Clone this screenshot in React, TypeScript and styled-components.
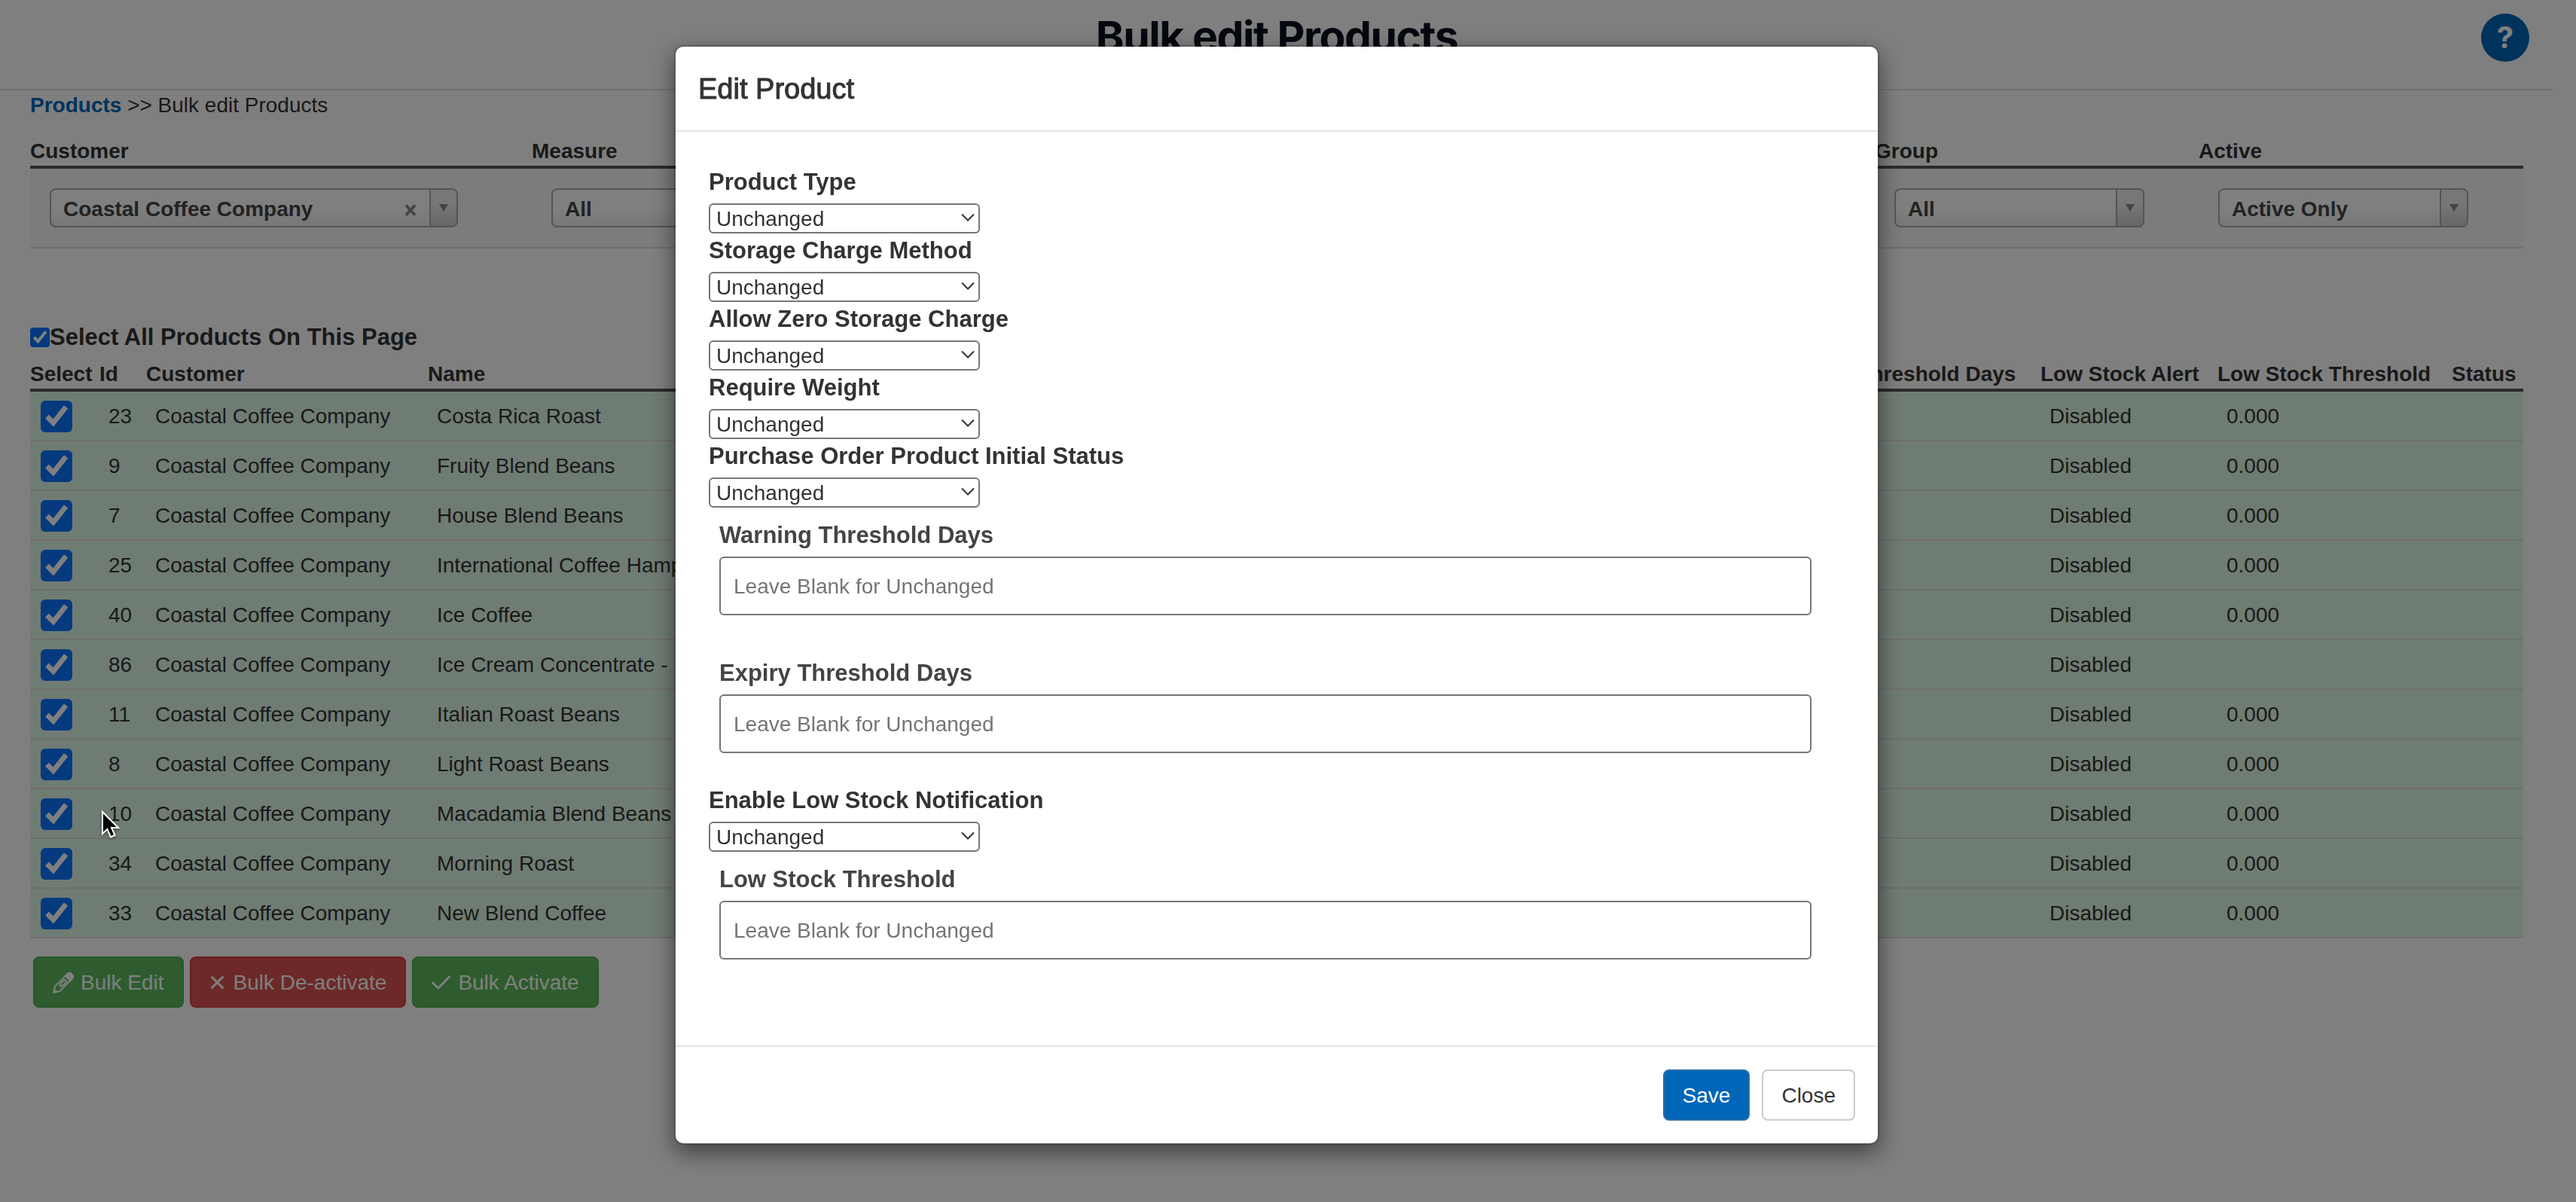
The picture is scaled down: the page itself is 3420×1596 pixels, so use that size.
import React from "react";
import styled, { createGlobalStyle } from "styled-components";

const GlobalStyle = createGlobalStyle`
  *, *::before, *::after { box-sizing: border-box; }
  html, body { margin: 0; padding: 0; background: #fff; }
  body {
    overflow: hidden;
    color: #333;
    font-family: "Liberation Sans", Arial, Helvetica, sans-serif;
    font-size: 28px;
    line-height: 40px;
  }
  button, input, select { font: inherit; color: inherit; margin: 0; }
`;

const Page = styled.div`
  min-height: 100vh;
  padding-right: 30px;
`;

const Header = styled.header`
  display: grid;
  grid-template-columns: 1fr auto 1fr;
  align-items: center;
  height: 120px;
  padding: 0 32px 18px;
  border-bottom: 2px solid #e5e5e5;
`;

const PageTitle = styled.h1`
  grid-column: 2;
  margin: 0 0 2px;
  color: #0b1020;
  font-family: Inter, sans-serif;
  font-size: 57px;
  font-weight: 700;
  letter-spacing: -0.025em;
  line-height: 98px;
`;

const HelpButton = styled.button`
  justify-self: end;
  width: 64px;
  height: 64px;
  padding: 0;
  border: 0;
  border-radius: 50%;
  background: #0067b8;
  color: #fff;
  font-family: Inter, sans-serif;
  font-size: 40px;
  font-weight: 700;
  line-height: 64px;
`;

const Main = styled.main`
  padding: 0 40px;
`;

const Breadcrumb = styled.nav`
  margin-bottom: 20px;
`;

const CrumbLink = styled.a`
  color: #0067b8;
  font-weight: 700;
  text-decoration: none;
`;

const Table = styled.table`
  width: 100%;
  table-layout: fixed;
  border-collapse: separate;
  border-spacing: 0;
`;

const HeadCell = styled.th`
  padding: 2px 0 0;
  border-bottom: 4px solid #555;
  line-height: 38px;
  text-align: left;
  white-space: nowrap;
`;

const FilterCell = styled.td`
  padding: 26px 26px;
  border-bottom: 2px solid #ddd;
  background: #f9f9f9;
`;

const PickerBox = styled.div<{ $wide?: boolean }>`
  display: flex;
  width: ${(p) => (p.$wide ? 542 : 332)}px;
  height: 52px;
  overflow: hidden;
  border: 2px solid #aaa;
  border-radius: 8px;
  background: linear-gradient(to bottom, #fff 50%, #eee 100%);
  color: #444;
`;

const PickerSelect = styled.select`
  flex: 1;
  min-width: 0;
  padding: 4px 16px 0;
  border: 0;
  background: transparent;
  font-weight: 700;
  appearance: none;
`;

const PickerClear = styled.button`
  width: 50px;
  padding: 4px 0 0;
  border: 0;
  background: transparent;
  color: #888;
  line-height: 1;
`;

const PickerArrow = styled.span`
  display: flex;
  align-items: center;
  justify-content: center;
  width: 36px;
  border-left: 2px solid #aaa;
  background: linear-gradient(to bottom, #eee 40%, #ccc 100%);

  &::before {
    content: "";
    border: 6px solid transparent;
    border-top: 10px solid #888;
    border-bottom: 0;
  }
`;

const SelectAll = styled.label`
  display: flex;
  align-items: center;
  margin: 98px 0 8px;
  font-size: 31px;
  font-weight: 700;
`;

const Tick = styled.input<{ $size: number }>`
  width: ${(p) => p.$size}px;
  height: ${(p) => p.$size}px;
  accent-color: #0c74ff;
  clip-path: inset(0 round ${(p) => (p.$size > 30 ? 6 : 4)}px);
`;

const RowCell = styled.td`
  height: 66px;
  padding: 2px 12px 0;
  border-bottom: 2px solid #ddd;
  background: #dff9e7;
  white-space: nowrap;
`;

const TickCell = styled(RowCell)`
  padding: 12px 14px 10px;
  line-height: 0;
`;

const Actions = styled.div`
  display: flex;
  gap: 8px;
  padding: 24px 4px;
`;

const Button = styled.button<{ $bg: string; $line: string; $ink?: string }>`
  display: flex;
  align-items: center;
  gap: 9px;
  height: 68px;
  padding: 2px 24px 0;
  border: 2px solid ${(p) => p.$line};
  border-radius: 8px;
  background: ${(p) => p.$bg};
  color: ${(p) => p.$ink ?? "#fff"};
  white-space: nowrap;
`;

const Overlay = styled.div`
  position: fixed;
  inset: 0;
  padding: 60px 30px 0 0;
  background: rgba(0, 0, 0, 0.5);
`;

const Dialog = styled.form`
  width: 1600px;
  max-width: 100%;
  margin: 0 auto;
  border: 2px solid rgba(0, 0, 0, 0.2);
  border-radius: 12px;
  background: #fff;
  background-clip: padding-box;
  box-shadow: 0 10px 30px rgba(0, 0, 0, 0.5);
`;

const DialogHeader = styled.div`
  padding: 31px 30px 29px;
  border-bottom: 2px solid #e5e5e5;
`;

const DialogTitle = styled.h4`
  margin: 0;
  font-size: 38px;
  font-weight: 400;
  line-height: 51px;
  -webkit-text-stroke: 1px #333;
`;

const DialogBody = styled.div`
  padding: 44px 44px 74px;
`;

const DialogFooter = styled.div`
  display: flex;
  justify-content: flex-end;
  gap: 16px;
  padding: 30px;
  border-top: 2px solid #e5e5e5;
`;

const FieldLabel = styled.label`
  display: block;
  margin-bottom: 6px;
  font-size: 31px;
  font-weight: 700;
  line-height: 45px;
`;

const SelectFrame = styled.div`
  display: grid;
  align-items: center;
  width: 360px;
  height: 40px;

  & > * { grid-area: 1 / 1; }
  & > svg { justify-self: end; margin: 0 7px 2px 0; pointer-events: none; }
`;

const PlainSelect = styled.select`
  width: 100%;
  height: 100%;
  padding: 2px 8px 0;
  border: 2px solid #767676;
  border-radius: 6px;
  background: #fff;
  line-height: 34px;
  appearance: none;
`;

const TextField = styled.div`
  padding: 14px 44px 40px 14px;
  color: #444;
`;

const TextInput = styled.input`
  display: block;
  width: 100%;
  height: 78px;
  padding: 2px 17px 0;
  border: 2px solid #767676;
  border-radius: 6px;
  background: #fff;

  &::placeholder { color: #757575; opacity: 1; }
`;

const Pointer = styled.svg`
  position: fixed;
  left: 131px;
  top: 1072px;
  filter: drop-shadow(0 2px 2px rgba(0, 0, 0, 0.4));
`;

const PencilIcon = () => (
  <svg width="28" height="28" viewBox="0 0 28 28" fill="none" stroke="currentColor" strokeWidth="2" strokeLinejoin="round" aria-hidden="true">
    <path d="M1.2 26.8 3 18.6 17 4.6l6.4 6.4-14 14z" />
    <path d="M16.6 4.8 20 1.5a3 3 0 0 1 4.2 0l2.3 2.3a3 3 0 0 1 0 4.2L23.2 11.4z" fill="currentColor" />
    <path d="M9.5 18.5l1-4 5-5 3 3-5 5z" />
    <path d="M1.2 26.8l.8-3.6 2.8 2.8z" fill="currentColor" />
  </svg>
);

const CrossIcon = () => (
  <svg width="23" height="28" viewBox="0 0 23 28" fill="none" stroke="currentColor" strokeWidth="3" strokeLinecap="round" aria-hidden="true">
    <path d="M3.500 6.500l14 14M17.500 6.500l-14 14" />
  </svg>
);

const CheckIcon = () => (
  <svg width="26" height="28" viewBox="0 0 26 28" fill="none" stroke="currentColor" strokeWidth="3" strokeLinecap="round" strokeLinejoin="round" aria-hidden="true">
    <path d="M1.500 14l7.500 7L23.500 6" />
  </svg>
);

const company = "Coastal Coffee Company";

const products = [
  { id: 23, name: "Costa Rica Roast", threshold: "0.000" },
  { id: 9, name: "Fruity Blend Beans", threshold: "0.000" },
  { id: 7, name: "House Blend Beans", threshold: "0.000" },
  { id: 25, name: "International Coffee Hamper", threshold: "0.000" },
  { id: 40, name: "Ice Coffee", threshold: "0.000" },
  { id: 86, name: "Ice Cream Concentrate -", threshold: "" },
  { id: 11, name: "Italian Roast Beans", threshold: "0.000" },
  { id: 8, name: "Light Roast Beans", threshold: "0.000" },
  { id: 10, name: "Macadamia Blend Beans", threshold: "0.000" },
  { id: 34, name: "Morning Roast", threshold: "0.000" },
  { id: 33, name: "New Blend Coffee", threshold: "0.000" },
];

const Picker = ({ label, value, clearable }: { label: string; value: string; clearable?: boolean }) => (
  <PickerBox $wide={clearable}>
    <PickerSelect aria-label={label}>
      <option>{value}</option>
    </PickerSelect>
    {clearable && (
      <PickerClear type="button" aria-label="Clear customer">
        <svg width="16" height="16" viewBox="0 0 16 16" stroke="currentColor" strokeWidth="4" aria-hidden="true">
          <path d="M2 1.500l12 13M14 1.500l-12 13" />
        </svg>
      </PickerClear>
    )}
    <PickerArrow />
  </PickerBox>
);

const SelectField = ({ id, label }: { id: string; label: string }) => (
  <div>
    <FieldLabel htmlFor={id}>{label}</FieldLabel>
    <SelectFrame>
      <PlainSelect id={id}>
        <option>Unchanged</option>
      </PlainSelect>
      <svg width="18" height="12" viewBox="0 0 18 12" fill="none" stroke="#333" strokeWidth="2" aria-hidden="true">
        <path d="M1 1.500l8 8 8-8" />
      </svg>
    </SelectFrame>
  </div>
);

const InputField = ({ id, label }: { id: string; label: string }) => (
  <TextField>
    <FieldLabel htmlFor={id}>{label}</FieldLabel>
    <TextInput id={id} type="text" placeholder="Leave Blank for Unchanged" />
  </TextField>
);

export default function App() {
  return (
    <>
      <GlobalStyle />
      <Page>
        <Header>
          <PageTitle>Bulk edit Products</PageTitle>
          <HelpButton type="button" aria-label="Help">?</HelpButton>
        </Header>
        <Main>
          <Breadcrumb>
            <CrumbLink href="#products">Products</CrumbLink> &gt;&gt; Bulk edit Products
          </Breadcrumb>
          <Table>
            <colgroup>
              <col style={{ width: 666 }} />
              <col />
              <col style={{ width: 430 }} />
              <col style={{ width: 431 }} />
            </colgroup>
            <thead>
              <tr>
                <HeadCell>Customer</HeadCell>
                <HeadCell>Measure</HeadCell>
                <HeadCell>Group</HeadCell>
                <HeadCell>Active</HeadCell>
              </tr>
            </thead>
            <tbody>
              <tr>
                <FilterCell><Picker label="Customer" value={company} clearable /></FilterCell>
                <FilterCell><Picker label="Measure" value="All" /></FilterCell>
                <FilterCell><Picker label="Group" value="All" /></FilterCell>
                <FilterCell><Picker label="Active" value="Active Only" /></FilterCell>
              </tr>
            </tbody>
          </Table>
          <SelectAll>
            <Tick type="checkbox" defaultChecked $size={26} />
            Select All Products On This Page
          </SelectAll>
          <Table>
            <colgroup>
              <col style={{ width: 92 }} />
              <col style={{ width: 62 }} />
              <col style={{ width: 374 }} />
              <col />
              <col style={{ width: 336 }} />
              <col style={{ width: 235 }} />
              <col style={{ width: 311 }} />
              <col style={{ width: 95 }} />
            </colgroup>
            <thead>
              <tr>
                <HeadCell>Select</HeadCell>
                <HeadCell>Id</HeadCell>
                <HeadCell>Customer</HeadCell>
                <HeadCell>Name</HeadCell>
                <HeadCell>Expiry Threshold Days</HeadCell>
                <HeadCell>Low Stock Alert</HeadCell>
                <HeadCell>Low Stock Threshold</HeadCell>
                <HeadCell>Status</HeadCell>
              </tr>
            </thead>
            <tbody>
              {products.map((p) => (
                <tr key={p.id}>
                  <TickCell>
                    <Tick type="checkbox" defaultChecked $size={42} aria-label={`Select ${p.name}`} />
                  </TickCell>
                  <RowCell>{p.id}</RowCell>
                  <RowCell>{company}</RowCell>
                  <RowCell>{p.name}</RowCell>
                  <RowCell />
                  <RowCell>Disabled</RowCell>
                  <RowCell>{p.threshold}</RowCell>
                  <RowCell />
                </tr>
              ))}
            </tbody>
          </Table>
          <Actions>
            <Button type="button" $bg="#5cb85c" $line="#4cae4c"><PencilIcon />Bulk Edit</Button>
            <Button type="button" $bg="#d9534f" $line="#d43f3a"><CrossIcon />Bulk De-activate</Button>
            <Button type="button" $bg="#5cb85c" $line="#4cae4c"><CheckIcon />Bulk Activate</Button>
          </Actions>
        </Main>
      </Page>
      <Overlay>
        <Dialog role="dialog" aria-labelledby="dialog-title">
          <DialogHeader>
            <DialogTitle id="dialog-title">Edit Product</DialogTitle>
          </DialogHeader>
          <DialogBody>
            <SelectField id="product-type" label="Product Type" />
            <SelectField id="charge-method" label="Storage Charge Method" />
            <SelectField id="zero-charge" label="Allow Zero Storage Charge" />
            <SelectField id="require-weight" label="Require Weight" />
            <SelectField id="initial-status" label="Purchase Order Product Initial Status" />
            <InputField id="warning-days" label="Warning Threshold Days" />
            <InputField id="expiry-days" label="Expiry Threshold Days" />
            <SelectField id="low-stock" label="Enable Low Stock Notification" />
            <InputField id="low-stock-threshold" label="Low Stock Threshold" />
          </DialogBody>
          <DialogFooter>
            <Button type="button" $bg="#0067b8" $line="#2e6da4">Save</Button>
            <Button type="button" $bg="#fff" $line="#ccc" $ink="#333">Close</Button>
          </DialogFooter>
        </Dialog>
      </Overlay>
      <Pointer width="30" height="44" viewBox="0 0 30 44" aria-hidden="true">
        <path d="M5 6v29l6.500-6 4.500 10.500 5.500-2.500-4.500-10H26z" fill="#000" stroke="#fff" strokeWidth="2" />
      </Pointer>
    </>
  );
}
